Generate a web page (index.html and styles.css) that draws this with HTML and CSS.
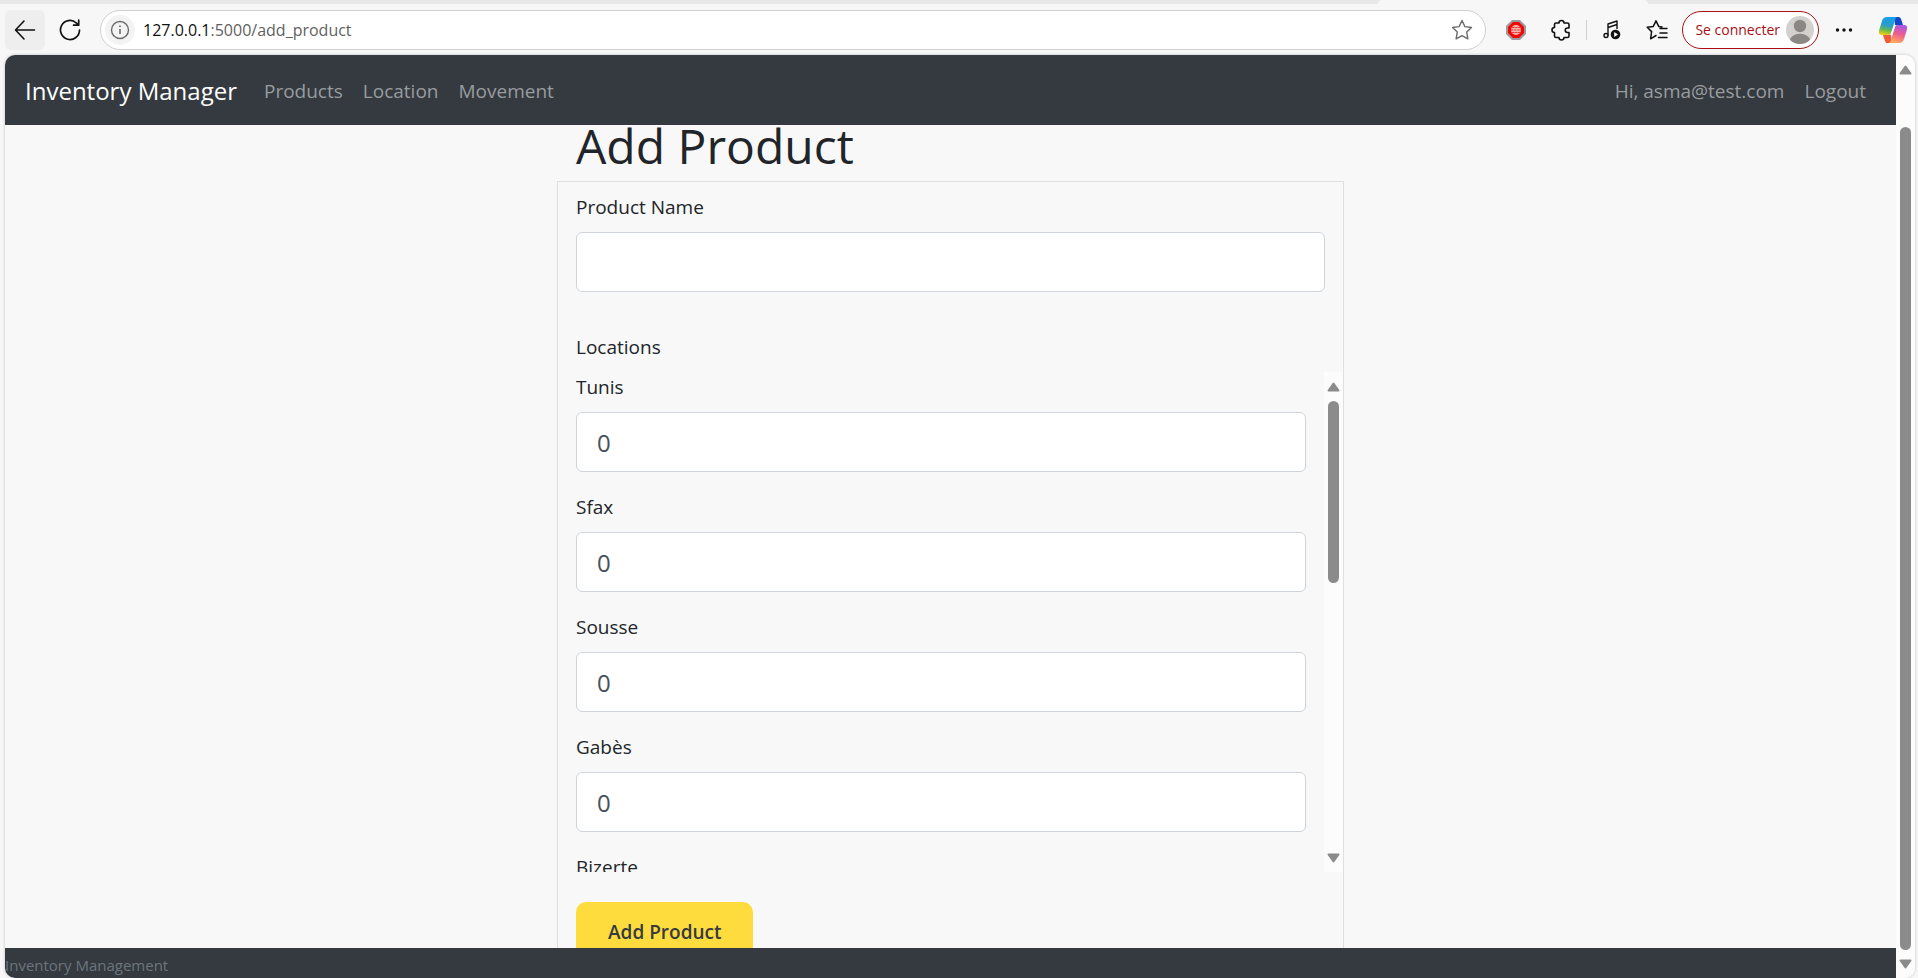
FILE: index.html
```html
<!DOCTYPE html>
<html lang="fr">
<head>
<meta charset="utf-8">
<title>Add Product</title>
<link rel="stylesheet" href="styles.css">
</head>
<body>
<div class="tabs"><span class="tab"></span></div>
<header class="toolbar">
  <button class="tool tool-active" aria-label="Back">
    <svg width="22" height="22" viewBox="0 0 22 22" fill="none" stroke="#111" stroke-width="1.6" stroke-linecap="round" stroke-linejoin="round"><path d="M20.500 11H1.500M10 2L1.500 11L10 20"/></svg>
  </button>
  <button class="tool" aria-label="Refresh">
    <svg width="22" height="22" viewBox="0 0 22 22" fill="none" stroke="#111" stroke-width="1.7" stroke-linecap="round" stroke-linejoin="round"><path d="M20.500 11a9.500 9.500 0 1 1-3.300-7.200L19.500 6M19.700 1.200V6.200H14.600"/></svg>
  </button>
  <div class="address">
    <button class="site-info" aria-label="Site information">
      <svg width="20" height="20" viewBox="0 0 20 20" fill="none" stroke="#6b6b6b" stroke-width="1.4"><circle cx="10" cy="10" r="8.500"/><path d="M10 9v5" stroke-width="1.600"/><circle cx="10" cy="6.300" r=".6" fill="#6b6b6b" stroke-width=".8"/></svg>
    </button>
    <a class="url" href="#"><span class="host">127.0.0.1</span>:5000/add_product</a>
    <button class="favorite" aria-label="Add to favorites">
      <svg width="22" height="22" viewBox="0 0 22 22" fill="none" stroke="#6b6b6b" stroke-width="1.400" stroke-linejoin="round"><path d="M11 1.500l2.900 6.100 6.600.9-4.800 4.600 1.200 6.800-5.900-3.200-5.900 3.200 1.200-6.800L1.500 8.500l6.600-.9z"/></svg>
    </button>
  </div>
  <button class="tool" aria-label="Ad blocker">
    <svg width="22" height="22" viewBox="0 0 22 22"><path d="M7 1h8l6 6v8l-6 6H7l-6-6V7z" fill="#9a9a9a"/><path d="M8 3h6l5 5v6l-5 5H8l-5-5V8z" fill="#f40606"/><circle cx="11" cy="11" r="5" fill="#f9b5b0"/><path d="M7 8.500h8M6 11h10M7 13.500h8" stroke="#e33" stroke-width="1" stroke-dasharray="2.500 .6"/></svg>
  </button>
  <button class="tool" aria-label="Extensions">
    <svg width="22" height="22" viewBox="0 0 22 22" fill="none" stroke="#111" stroke-width="1.600" stroke-linejoin="round"><path d="M6 4h3a2.500 2.500 0 0 1 5 0h3.500a1.500 1.500 0 0 1 1.500 1.500V9h-1.500a2 2 0 0 0 0 4.500H19v3.500a1.500 1.500 0 0 1-1.500 1.500H14a2.500 2.500 0 0 1-5 0H6A1.500 1.500 0 0 1 4.500 17v-3.500a2.500 2.500 0 0 1 0-5V5.500A1.500 1.500 0 0 1 6 4z"/></svg>
  </button>
  <span class="divider"></span>
  <button class="tool" aria-label="Media controls">
    <svg width="20" height="22" viewBox="0 0 20 22" fill="none" stroke="#111" stroke-width="1.400" stroke-linejoin="round"><circle cx="4" cy="16.500" r="2"/><path d="M6 16.500V5l9-3v8M6 8.500l9-3"/><circle cx="13.500" cy="15.500" r="4.800" fill="#111" stroke="none"/><path d="M12.200 13l3.800 2.500-3.800 2.500z" fill="#fff" stroke="none"/></svg>
  </button>
  <button class="tool" aria-label="Favorites">
    <svg width="22" height="22" viewBox="0 0 22 22" fill="none" stroke="#111" stroke-width="1.500" stroke-linecap="round" stroke-linejoin="round"><path d="M16 7.900L12.700 7.400 10 1.800 7.300 7.400 1.200 8.300 5.600 12.600 4.600 19.800 10 16.500M14 9.500h7M14 14h7M12.500 18.500h8.500"/></svg>
  </button>
  <button class="signin">
    <span>Se connecter</span>
    <svg width="28" height="28" viewBox="0 0 28 28"><defs><clipPath id="avatar"><circle cx="14" cy="14" r="14"/></clipPath></defs><circle cx="14" cy="14" r="14" fill="#d3d1ce"/><g clip-path="url(#avatar)" fill="#8b8783"><circle cx="14" cy="10" r="6.200"/><ellipse cx="14" cy="25" rx="10.500" ry="7.200"/></g></svg>
  </button>
  <button class="tool" aria-label="Settings and more">
    <svg width="20" height="6" viewBox="0 0 20 6" fill="#111"><circle cx="3.500" cy="3" r="1.700"/><circle cx="10" cy="3" r="1.700"/><circle cx="16.500" cy="3" r="1.700"/></svg>
  </button>
  <button class="tool copilot" aria-label="Copilot">
    <svg width="30" height="28" viewBox="0 0 30 28">
      <defs>
        <linearGradient id="cool" x1="0.500" y1="0" x2="0.300" y2="1"><stop offset="0" stop-color="#169fec"/><stop offset=".45" stop-color="#2b9ccb"/><stop offset=".72" stop-color="#65b84f"/><stop offset="1" stop-color="#f2cf16"/></linearGradient>
        <linearGradient id="warm" x1="0.700" y1="0" x2="0.400" y2="1"><stop offset="0" stop-color="#a956e8"/><stop offset=".5" stop-color="#ee5d8d"/><stop offset="1" stop-color="#ffab5c"/></linearGradient>
      </defs>
      <path d="M16 1h4.500c1.500 0 2.200 1 2.700 2.600L25 9h-4c-2 0-3 1-3.600 3z" fill="#1647c8"/>
      <path d="M14 27H9.500c-1.500 0-2.200-1-2.700-2.600L5 19h4c2 0 3-1 3.600-3z" fill="#ef5a37"/>
      <path d="M9 1h11c-1.800 0-2.500 1.300-3 3l-3.500 12c-.7 2-1.700 3-3.700 3H4C1 19 .4 16.800 1.200 14L4 5c.8-2.700 2.200-4 5-4z" fill="url(#cool)"/>
      <path d="M21 27H10c1.800 0 2.500-1.300 3-3l3.500-12c.7-2 1.700-3 3.700-3H26c3 0 3.600 2.200 2.800 5L26 23c-.8 2.700-2.200 4-5 4z" fill="url(#warm)"/>
      <path d="M16.300 9h3.200c-1.600.3-2.400 1.300-3 3l-2.200 7h-3c1.200-.5 1.800-1.600 2.200-3z" fill="#fff"/>
    </svg>
  </button>
</header>
<div class="viewport">
  <div class="page">
    <nav class="navbar">
      <a class="brand" href="#">Inventory Manager</a>
      <a href="#">Products</a>
      <a href="#">Location</a>
      <a href="#">Movement</a>
      <span class="user">Hi, asma@test.com</span>
      <a href="#">Logout</a>
    </nav>
    <main class="content">
      <h1>Add Product</h1>
      <form class="card">
        <div class="field">
          <label for="name">Product Name</label>
          <input id="name" type="text">
        </div>
        <h2>Locations</h2>
        <div class="locations">
          <div class="list">
            <div class="field"><label for="tunis">Tunis</label><input id="tunis" type="text" value="0"></div>
            <div class="field"><label for="sfax">Sfax</label><input id="sfax" type="text" value="0"></div>
            <div class="field"><label for="sousse">Sousse</label><input id="sousse" type="text" value="0"></div>
            <div class="field"><label for="gabes">Gabès</label><input id="gabes" type="text" value="0"></div>
            <div class="field"><label for="bizerte">Bizerte</label><input id="bizerte" type="text" value="0"></div>
          </div>
          <div class="scrollbar">
            <svg width="13" height="10" viewBox="0 0 13 10"><path d="M6.500 1.500L11.500 8.500H1.500z" fill="#8b8b8b" stroke="#8b8b8b" stroke-width="2" stroke-linejoin="round"/></svg>
            <div class="track"><div class="thumb thumb-list"></div></div>
            <svg width="13" height="10" viewBox="0 0 13 10"><path d="M6.500 8.500L11.500 1.500H1.500z" fill="#8b8b8b" stroke="#8b8b8b" stroke-width="2" stroke-linejoin="round"/></svg>
          </div>
        </div>
        <button class="submit" type="button">Add Product</button>
      </form>
    </main>
    <footer class="footer">Inventory Management</footer>
  </div>
  <div class="scrollbar">
    <svg width="13" height="10" viewBox="0 0 13 10"><path d="M6.500 1.500L11.500 8.500H1.500z" fill="#8b8b8b" stroke="#8b8b8b" stroke-width="2" stroke-linejoin="round"/></svg>
    <div class="track track-end"><div class="thumb thumb-page"></div></div>
    <svg width="13" height="10" viewBox="0 0 13 10"><path d="M6.500 8.500L11.500 1.500H1.500z" fill="#8b8b8b" stroke="#8b8b8b" stroke-width="2" stroke-linejoin="round"/></svg>
  </div>
</div>
</body>
</html>
```
FILE: styles.css
```css
* { box-sizing: border-box; }
body {
  margin: 0;
  height: 100vh;
  overflow: hidden;
  display: flex;
  flex-direction: column;
  background: #f7f7f7;
  color: #212529;
  font: 19px/30px "Segoe UI", "Open Sans", "Noto Sans", sans-serif;
}
button { font: inherit; color: inherit; border: 0; padding: 0; background: none; }
a { color: inherit; text-decoration: none; }
svg { display: block; flex: none; }

.tabs { flex: none; height: 4px; background: #e8e8e8; display: flex; justify-content: flex-end; padding-right: 270px; }
.tab { width: 270px; background: #f7f7f7; border-radius: 4px 4px 0 0; }

.toolbar { flex: none; height: 51px; padding: 1px 5px 0; display: flex; align-items: center; gap: 5px; }
.tool { width: 40px; height: 40px; border-radius: 6px; display: flex; align-items: center; justify-content: center; }
.tool-active { background: #eee; }
.copilot { margin-left: 4px; }
.address {
  flex: 1;
  height: 40px;
  margin: 0 5px;
  padding: 0 12px 0 4px;
  display: flex;
  align-items: center;
  gap: 8px;
  border: 1px solid #d0d0d0;
  border-radius: 20px;
  background: #fff;
}
.site-info { width: 30px; height: 30px; border-radius: 15px; background: #f3f3f3; display: flex; align-items: center; justify-content: center; }
.url { flex: 1; font-size: 16px; color: #5f5f5f; }
.host { color: #111; }
.divider { width: 1px; height: 20px; background: #cfcfcf; }
.signin {
  height: 38px;
  padding: 0 4px 0 12px;
  display: flex;
  align-items: center;
  gap: 6px;
  border: 1px solid #a80f14;
  border-radius: 19px;
  background: #fff;
  color: #a80f14;
  font-size: 14px;
}

.viewport { flex: 1; min-height: 0; margin: 0 3px 0 5px; display: flex; border-radius: 10px; overflow: hidden; box-shadow: 0 0 3px #bbb; }
.page { flex: 1; display: flex; flex-direction: column; background: #f8f8f8; }
.navbar {
  flex: none;
  height: 70px;
  padding: 2px 30px 0 20px;
  display: flex;
  align-items: center;
  gap: 20px;
  background: #343a40;
  color: #999c9f;
}
.brand { margin-right: 7px; color: #fff; font-size: 24px; }
.user { margin-left: auto; }

.content { flex: 1; min-height: 0; overflow: hidden; width: 787px; max-width: 100%; margin: 0 auto; }
h1 { margin: 0 0 14px; padding-left: 19px; font-size: 48px; line-height: 42px; font-weight: 400; }
h2 { margin: 40px 0 10px; font-size: 19px; line-height: 30px; font-weight: 400; }
.card { padding: 10px 0 30px 18px; border: 1px solid #dfdfdf; }
.card > .field { padding-right: 18px; }
.field { display: flex; flex-direction: column; gap: 10px; margin-bottom: 20px; }
.field input {
  width: 100%;
  height: 60px;
  padding: 0 20px;
  border: 1px solid #ced4da;
  border-radius: 6px;
  background: #fff;
  color: #495057;
  font: inherit;
  font-size: 24px;
}
.locations { display: flex; height: 500px; margin-bottom: 30px; }
.list { flex: 1; overflow: hidden; padding-right: 18px; }

.scrollbar { flex: none; width: 19px; padding: 10px 0 9px; display: flex; flex-direction: column; align-items: center; gap: 9px; background: #fcfcfc; }
.track { flex: 1; display: flex; flex-direction: column; }
.track-end { justify-content: flex-end; }
.thumb { width: 11px; border-radius: 6px; background: #8b8b8b; }
.thumb-list { height: 41%; }
.thumb-page { height: 95%; }

.submit { height: 60px; padding: 0 32px; border-radius: 10px; background: #ffdc3d; color: #373a3f; font-weight: 600; }
.footer { flex: none; height: 30px; padding-top: 2px; background: #343a40; color: #6c757d; font-size: 15px; }
```
